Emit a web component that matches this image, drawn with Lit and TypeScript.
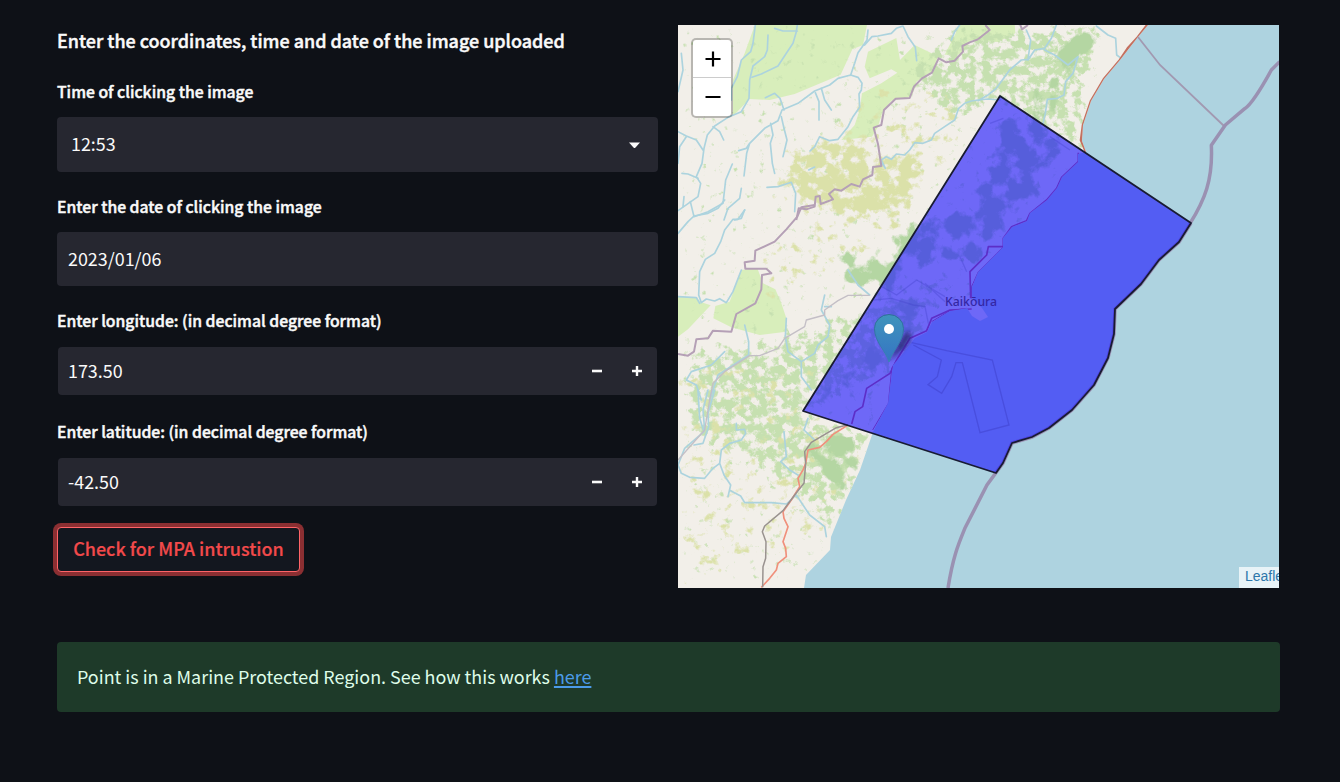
import { LitElement, html, css, svg } from "lit";
import { customElement, property } from "lit/decorators.js";

const river = (d: string) => svg`<path class="river" d=${d} />`;
const border = (d: string) => svg`<path class="border" d=${d} />`;

@customElement("region-map")
class RegionMap extends LitElement {
  static styles = css`
    :host { display: block; position: relative; width: 601px; height: 563px; overflow: hidden; background: #aed3e0; }
    .canvas { display: block; width: 601px; height: 563px; }
    .river { fill: none; stroke: #acd3de; stroke-width: 5; stroke-linejoin: round; stroke-linecap: round; }
    .border { fill: none; stroke: #b5a0b6; stroke-width: 6; stroke-linejoin: round; }
    .sea-border { fill: none; stroke: #9a91b2; stroke-width: 10.5; stroke-linejoin: round; }
    .park { fill: #d8eebb; }
    .rail { fill: none; stroke: #99928f; stroke-width: 4.5; stroke-linejoin: round; }
    .road { fill: none; stroke: #f0907c; stroke-width: 5; stroke-linejoin: round; }
    .minor { fill: none; stroke: #c4bfc6; stroke-width: 4; stroke-linejoin: round; }
    .label { font: 500 12px "Noto Sans", sans-serif; fill: #3427a4; }
    .zoom { position: absolute; left: 13px; top: 13px; width: 38px; height: 76px; border: 2px solid rgba(0, 0, 0, 0.24); border-radius: 5px; background: #fff; background-clip: padding-box; display: flex; flex-direction: column; }
    .zoom-btn { flex: 1; display: grid; place-items: center; padding-left: 1px; }
    .zoom-btn:first-child { flex: none; height: 37px; border-bottom: 1px solid #ccc; }
    .credit { position: absolute; right: 0; bottom: 0; width: 34px; height: 21px; padding-left: 6px; overflow: hidden; white-space: nowrap; background: rgba(255, 255, 255, 0.72); color: #2d77aa; font: 14px/19px "Liberation Sans", Arial, sans-serif; }
  `;

  private scrub(id: string, freq: number, seed: number, color: string) {
    return svg`<filter id=${id} filterUnits="userSpaceOnUse" x="678" y="25" width="601" height="563" color-interpolation-filters="sRGB">
      <feGaussianBlur in="SourceAlpha" stdDeviation="7" result="area" />
      <feTurbulence type="fractalNoise" baseFrequency=${freq} numOctaves="5" seed=${seed} />
      <feColorMatrix values="0 0 0 0 0  0 0 0 0 0  0 0 0 0 0  1 0 0 0 0" result="noise" />
      <feComposite in="area" in2="noise" operator="arithmetic" k1="0" k2="1" k3="1" k4="-1" />
      <feComponentTransfer result="cut"><feFuncA type="linear" slope="6" /></feComponentTransfer>
      <feFlood flood-color=${color} />
      <feComposite in2="cut" operator="in" />
      <feGaussianBlur stdDeviation="0.45" />
    </filter>`;
  }

  render() {
    const zone = "M1000 96 L1191 223 L1179 242 L1159 260 L1141 284 L1115 309 L1114 334 L1108 358 L1094 385 L1072 410 L1049 428 L1032 437 L1012 443 L1003 463 L996 473 L803 411 Z";
    return html`
      <svg class="canvas" viewBox="678 25 601 563">
        <defs>
          ${this.scrub("forest", 0.06, 4, "#b4d6a2")}
          ${this.scrub("scrub", 0.09, 11, "#dbe1a9")}
          ${this.scrub("bush", 0.12, 23, "#c6e0b0")}
          <clipPath id="land"><path d="M678 25 H1148 L1138 37 L1120 60 L1104 79 L1091 101 L1083 125 L1082 141 L1086 152 L1078 154 L1078 162 L1062 177 L1057 188 L1047 200 L1030 213 L1027 221 L1012 227 L1003 238 L1003 247 L997 253 L978 272 L972 287 L972 298 L982 308 L988 317 L980 321 L972 316 L967 308 L950 311 L932 322 L927 332 L915 338 L900 357 L893 365 L891 380 L888 403 L873 432 L860 470 L846 500 L831 537 L830 550 L806 575 L804 588 H678 Z" /></clipPath>
          <clipPath id="zone"><path d=${zone} /></clipPath>
          <linearGradient id="pin" x1="0" y1="0" x2="0" y2="1"><stop offset="0" stop-color="#2e6c97" /><stop offset="1" stop-color="#3883b7" /></linearGradient>
          <linearGradient id="pinfill" x1="0" y1="0" x2="0" y2="1"><stop offset="0" stop-color="#3f94bb" /><stop offset="1" stop-color="#3574c4" /></linearGradient>
          <filter id="soft" x="-50%" y="-50%" width="200%" height="200%"><feGaussianBlur stdDeviation="2" /></filter>
        </defs>
        <g clip-path="url(#land)">
          <rect x="678" y="25" width="601" height="563" fill="#f2efe9" />
          <g transform="translate(678 20) scale(.33333)">
            <path class="park" d="M236 0H570L555 75L523 88L488 164L350 222L275 240L215 237L165 288V180L200 100Z M570 95L655 54L666 120L710 75L778 108L772 150L715 185L700 230L640 242L612 280L600 320L582 350L490 360L530 315L545 270L552 220L610 190L658 158L640 148L575 175L560 140Z M848 10H1010L1012 40L960 66L880 60L850 104L800 104Z" />
          </g>
          <g transform="translate(678 200) scale(.33333)">
            <path class="park" d="M0 290L55 292L68 306L98 316L30 388L0 410Z M190 210L238 205L255 250L292 268L310 310L324 352V395L245 405L160 382L106 355L112 318L155 305Z" />
          </g>
          <g filter="url(#bush)">
            <path fill-opacity=".46" d="M690 355L770 345L850 320L880 300L930 290L960 250L900 360L800 410L835 430L870 430L835 525L770 470L690 430Z" />
            <path fill-opacity=".46" d="M900 80L960 30L1110 25L1080 90V150L1000 96L960 120Z" />
            <path fill-opacity=".31" d="M678 25H1100V588H678Z" />
          </g>
          <g filter="url(#scrub)">
            <path fill-opacity=".49" d="M780 150L830 140L890 160L925 145L912 200L880 215L840 215L800 200Z" />
            <path fill-opacity=".4" d="M880 80L980 100L910 230L760 310L750 250L800 220L750 190Z" />
            <path fill-opacity=".4" d="M678 360H830L800 410L870 435L830 540L678 588Z" />
          </g>
          <g filter="url(#forest)">
            <path fill-opacity=".8" d="M1055 36L1098 25L1095 55L1078 66L1074 80L1062 72L1050 55Z" />
            <path fill-opacity=".62" d="M1045 70L1070 78L1048 125L1020 110L1035 75Z" />
            <path fill-opacity=".68" d="M832 250L848 242L862 265L905 225L925 215L890 296L840 288Z" />
            <path fill-opacity=".74" d="M815 433L850 433L863 450L845 492L825 484L805 448Z" />
            <path fill-opacity=".6" d="M678 25H735L720 32L688 36L678 38Z" />
            <path fill-opacity=".64" d="M1000 112L1038 118L1065 150L1045 190L1010 225L975 265L940 262L895 278L925 215L970 195L990 150Z" />
            <path fill-opacity=".53" d="M905 285L935 290L930 315L890 360L860 400L810 412L850 350Z" />
          </g>
          <g transform="translate(678 20) scale(.33333)">
            ${river("M232 15L225 70L218 95L190 120L178 170L160 205L160 240")}
            ${river("M270 45L268 90L260 110L225 138L215 180L213 235L190 275L150 292L110 318L88 345L78 385L72 430L55 470L68 490L60 530L0 572")}
            ${river("M358 15L355 35L345 70L325 100L300 138L250 162L222 172M358 33H315L290 25")}
            ${river("M570 30L567 60L540 98L530 130L518 165L480 175L455 195L410 213L360 250L312 270L300 302L260 325L215 370L205 385L182 392M215 370L206 400L198 468")}
            ${river("M560 75L582 50L600 48L640 40L655 25L675 18L690 50L712 82L716 122")}
            ${river("M518 165L540 172L552 190L550 210L543 222L545 262L525 290L510 320L480 358L455 362L425 350L410 380L396 393")}
            ${river("M262 233L290 220L306 235L318 270M310 290L318 325L327 360L315 410M278 310L285 345L277 370L283 430L290 460M412 218L423 245V300M430 205L440 240L460 270")}
            ${river("M10 100L15 150L0 215M0 335L25 348L55 360L75 390M25 350L5 380L0 430M105 320L125 335L137 360M12 460L30 462L60 475M18 530L15 560M37 545L48 590L90 575L135 550L143 480L163 432")}
            ${river("M190 505L185 535L150 565L138 600M200 570L190 595L170 600M267 502L300 500L340 487L353 520L350 575M392 450L410 441M845 15L830 35L820 60")}
            ${river("M966 240L930 237L900 240L880 243L860 250L842 265L830 300L800 320L770 340L760 360L735 370L710 368L695 390L680 405L655 402L640 418L625 410L610 420L622 445L612 430")}
          </g>
          <g transform="translate(978 20) scale(.33333)">
            ${river("M145 30L158 60L150 118L130 120L95 150L55 205L30 225L0 242M235 15L220 55L200 85L170 90L150 120M200 90L230 105L270 135L300 110L285 160L263 185L258 225L238 235L208 238L202 280L195 310M355 18L390 45L413 55L416 105L430 115")}
          </g>
          <g transform="translate(678 200) scale(.33333)">
            ${river("M200 30L180 58H165L140 90L128 125L110 160L82 178L65 215L62 285L70 308L85 297L110 303L125 296L145 308L165 275L190 210")}
            ${river("M0 100L30 65L48 48L90 40L120 25L140 0M0 290L55 293L65 310M440 285L430 330L455 375L450 410L420 435L410 460L370 485V530L400 570M325 355L322 410L330 455L370 485M200 375L212 425V465L120 525L95 600M440 320L460 320M25 540L40 515L100 495L140 455M25 540L55 555L70 600M510 210L540 255L575 285")}
          </g>
          <g transform="translate(678 390) scale(.33333)">
            ${river("M60 0L65 85L78 125L20 175L0 225L10 250L35 262L80 265L105 235L125 220L130 180L155 160L190 150L203 130L200 118L175 120V100M110 0L90 70L92 110L75 160L48 165M90 0L75 60L80 120M125 220L138 255L158 285L150 320M158 302L188 318L200 338L280 338L325 342L355 315L395 375L440 410L445 440M318 125L325 200L308 215L335 240L360 255M390 85L378 120L410 150")}
          </g>
          <g transform="translate(678 20) scale(.33333)">
            ${border("M900 58L875 67L853 78L855 95L830 122L805 127L782 115L762 158L732 175L708 200L695 234L653 236L618 270L610 315L587 323L600 372L610 438L585 441L583 465L555 478L545 500L520 492L490 512L470 508L453 522L465 538L428 552L425 528L413 530L410 560L385 568L362 565L355 600")}
          </g>
          <g transform="translate(978 20) scale(.33333)">
            ${border("M22 15L35 30L0 58M125 10L132 28L150 15")}
          </g>
          <g transform="translate(678 200) scale(.33333)">
            ${border("M410 15L370 22L358 50L325 88L290 125L232 152L230 182L200 187L202 206H265L280 220L252 225L250 268L232 310L175 342L160 395L105 392L90 415L55 418L48 455L30 467L0 462")}
            <path class="minor" d="M575 286H510L480 302L440 330V345L385 360L380 380L320 415L300 445L245 467L215 467L140 515L105 550L95 600L80 690L0 780" />
          </g>
          <path d="M1148 24L1138 37L1128 48L1120 60L1104 79L1091 101L1083 125L1081 140L1086 152" fill="none" stroke="#c4705f" stroke-width="2.6" />
          <g transform="translate(800 90) scale(.33333)" fill="none" stroke="#c45a72" stroke-width="5" stroke-linejoin="round">
            <path d="M835 188V215L785 262L770 295L740 330L690 370L680 392L635 410L610 445L610 470L590 470H565L560 495L510 545L512 625M515 657L450 660L395 685L380 722L330 745L290 810L270 850L200 895L188 950L165 965L155 1002" />
            <path stroke-width="3" d="M610 470L590 490L535 545L515 590L515 625M500 655L450 662L395 695M290 810L275 835L272 870L265 940L218 1020" />
          </g>
          <g transform="translate(678 390) scale(.33333)">
            <path class="road" d="M510 105L465 133L445 155L425 172L390 180L383 220L375 240L360 265L365 290L340 330L315 365L318 385L330 410L315 455L323 475L325 500L300 520L295 540L275 565L250 592" />
            <path class="rail" d="M510 104L475 113L400 157L380 185L383 220L378 280L350 315L315 362L260 408L253 425L264 455L263 505L255 530L254 592" />
          </g>
        </g>
        <path d="M1138 37L1160 65L1224 126" fill="none" stroke="#a299b1" stroke-width="1.8" />
        <g transform="translate(978 20) scale(.33333)">
          <path class="sea-border" d="M905 125L880 150Q825 250 800 266L742 315L700 376C705 480 680 540 635 612" />
        </g>
        <path d="M1191 223L1179 242L1159 260L1141 284L1115 309L1114 334L1108 358L1094 385L1072 410L1049 428L1032 437L1012 443L1003 463L987 485L965 528C958 545 953 557 948 588" fill="none" stroke="#9a91b2" stroke-width="3.5" />
        <path d=${zone} fill="#1a12ff" fill-opacity=".61" stroke="#181b32" stroke-width="1.8" stroke-linejoin="round" />
        <g clip-path="url(#zone)">
          <g transform="translate(800 90) scale(.33333)" fill="none" stroke="#3c3bc5" stroke-opacity=".45" stroke-width="4">
            <path d="M335 758L440 782L577 810L627 1005L540 1028L487 818H468L455 860L425 910L384 884L412 860L424 810L340 765" />
            <path stroke-opacity=".3" d="M245 590L290 615L350 570L435 620M375 580L435 635M220 630L275 625L340 645L375 650L385 700M750 140L810 180M480 500L500 545M570 100L610 85" />
          </g>
        </g>
        <text class="label" x="945" y="306" textLength="52" lengthAdjust="spacingAndGlyphs">Kaikōura</text>
        <path d="M889 361L903 335Q912 328 911 336Q907 348 889 361" fill="#17194f" opacity=".65" filter="url(#soft)" />
        <path d="M889 362C886 351 874.500 342 874.500 328.500A14.500 14 0 0 1 903.500 328.500C903.500 342 892 351 889 362Z" fill="url(#pinfill)" stroke="url(#pin)" stroke-width="1" />
        <circle cx="889" cy="329" r="5" fill="#fff" />
      </svg>
      <div class="zoom">
        <div class="zoom-btn"><svg width="16" height="16"><path d="M8 0.500V15.500M.5 8H15.500" stroke="#000" stroke-width="2.200" /></svg></div>
        <div class="zoom-btn"><svg width="16" height="16"><path d="M.5 8H15.500" stroke="#000" stroke-width="2" /></svg></div>
      </div>
      <div class="credit">Leaflet</div>
    `;
  }
}

@customElement("form-field")
class FormField extends LitElement {
  @property() label = "";
  @property() value = "";
  @property() kind = "text";
  static styles = css`
    :host { display: block; }
    .label { height: 24px; line-height: 24px; font-size: 15.75px; font-weight: 500; color: #fafafa; white-space: nowrap; -webkit-text-stroke: 0.45px; }
    .box { box-sizing: border-box; display: flex; align-items: center; border-radius: 4px; background: #262730; margin-top: 13px; color: #fafafa; font-size: 17.9px; line-height: 26px; }
    .select { height: 55px; padding: 0 17px 0 14px; }
    .text { height: 54px; padding-left: 11px; }
    .number { height: 48px; margin: 14px 1px 0; padding: 0 14px 0 10px; }
    .value { flex: 1; padding-bottom: 2px; }
    .select .value { padding-bottom: 4px; }
    .steps { display: flex; gap: 28px; }
    .icon { display: block; }
  `;
  render() {
    return html`
      <div class="label">${this.label}</div>
      <div class="box ${this.kind}">
        <span class="value">${this.value}</span>
        ${this.kind === "select" ? html`<svg class="icon" width="13" height="8"><path d="M1 1.500H12L7.500 6.500Q6.500 7.500 5.500 6.500Z" fill="#fafafa" /></svg>` : ""}
        ${this.kind === "number" ? html`<div class="steps">
          <svg class="icon" width="12" height="12"><path d="M1 6H11" stroke="#fafafa" stroke-width="2.600" /></svg>
          <svg class="icon" width="12" height="12"><path d="M1 6H11M6 1V11" stroke="#fafafa" stroke-width="2.400" /></svg>
        </div>` : ""}
      </div>`;
  }
}

@customElement("app-root")
class AppRoot extends LitElement {
  static styles = css`
    :host { display: block; box-sizing: border-box; width: 1340px; height: 782px; padding: 25px 60px 0 57px; background: #0e1117; font-family: "Noto Sans CJK SC", "Noto Sans", sans-serif; color: #fafafa; overflow: hidden; }
    .columns { display: grid; grid-template-columns: 601px 601px; gap: 20px; height: 563px; }
    .title { height: 30px; line-height: 30px; font-size: 17.96px; font-weight: 500; white-space: nowrap; -webkit-text-stroke: 0.45px; }
    .f1 { margin-top: 25px; }
    .f2 { margin-top: 23px; }
    .f3 { margin-top: 23px; }
    .f4 { margin-top: 25px; }
    .check { display: block; box-sizing: border-box; width: 243px; height: 45px; margin: 21px 0 0; padding: 0 0 4px; border: 1px solid #ff6468; border-radius: 4px; background: #13171f; box-shadow: 0 0 0 4px #8b2f32; color: #f24a4b; font-family: inherit; font-size: 17.98px; font-weight: 500; white-space: nowrap; -webkit-text-stroke: 0.2px; }
    .alert { box-sizing: border-box; width: 1223px; height: 70px; margin-top: 54px; padding: 0 20px; border-radius: 4px; background: #1e3a29; color: #dffde9; font-size: 17.92px; line-height: 68px; white-space: nowrap; }
    .link { color: #4c9be8; text-decoration: underline; text-decoration-thickness: 2px; text-underline-offset: 2px; }
  `;
  render() {
    return html`
      <div class="columns">
        <div>
          <div class="title">Enter the coordinates, time and date of the image uploaded</div>
          <form-field class="f1" kind="select" label="Time of clicking the image" value="12:53"></form-field>
          <form-field class="f2" kind="text" label="Enter the date of clicking the image" value="2023/01/06"></form-field>
          <form-field class="f3" kind="number" label="Enter longitude: (in decimal degree format)" value="173.50"></form-field>
          <form-field class="f4" kind="number" label="Enter latitude: (in decimal degree format)" value="-42.50"></form-field>
          <button class="check">Check for MPA intrustion</button>
        </div>
        <region-map></region-map>
      </div>
      <div class="alert">Point is in a Marine Protected Region. See how this works <a class="link">here</a></div>
    `;
  }
}
